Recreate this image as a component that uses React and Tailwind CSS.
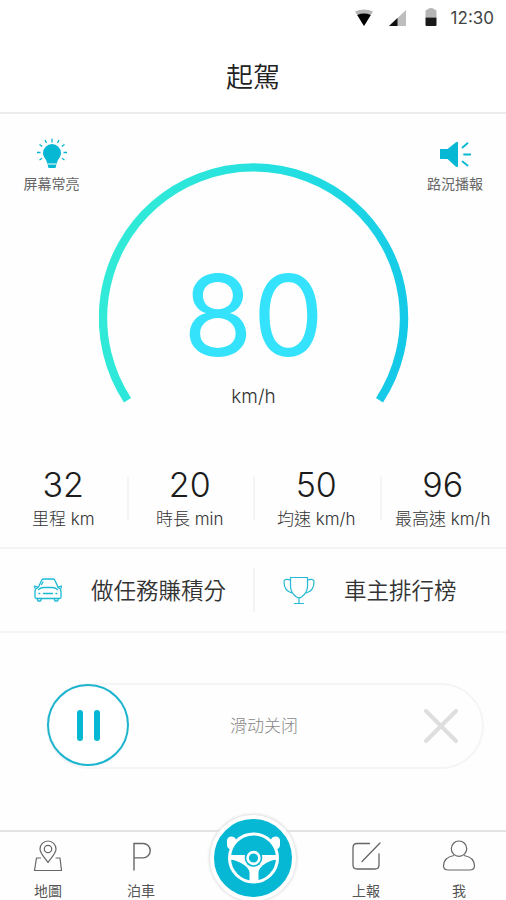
const stats = [
  { value: '32', label: '里程 km' },
  { value: '20', label: '時長 min' },
  { value: '50', label: '均速 km/h' },
  { value: '96', label: '最高速 km/h' },
];

const fontClass = "font-['Inter','Noto_Sans_CJK_TC',sans-serif]";

function StatusBar() {
  return (
    <div className="flex h-9 items-center justify-end pr-3">
      <svg className="mr-0.5 h-5 w-[94px]" viewBox="0 0 94 20" fill="none">
        <path d="M0 3.500Q9 -.5 18 3.500L9 18Z" fill="#b5b5b5" />
        <path d="M2.200 7Q9 4.200 15.800 7L9 18Z" fill="#000" />
        <path d="M34 18L51 2V18Z" fill="#bdbdbd" />
        <path d="M34 18L42.500 10V18Z" fill="#111" />
        <path d="M70.500 9.500V3q0-1.500 2-1.500Q73 0 76 0t3.500 1.500q2 0 2 1.500v6.500Z" fill="#b5b5b5" />
        <path d="M70.500 9.500h11v7.500q0 1-1 1h-9q-1 0-1-1Z" fill="#1a1a1a" />
      </svg>
      <span className="mt-0.5 text-[17px] text-[#444]">12:30</span>
    </div>
  );
}

function BulbIcon() {
  return (
    <svg className="h-8 w-8" viewBox="0 0 32 32" fill="#06b8d3">
      <path d="M16 6a9 9 0 0 0-9 9c0 5 4 6 4 10.500h10c0-4.500 4-5.500 4-10.500a9 9 0 0 0-9-9Z" />
      <path d="M11.500 26.500h9l-1 3.500h-7Z" />
      <path d="M16 .8v3.600M9 2l1.500 3M23 2l-1.500 3M3.500 6.500l2.800 2M28.500 6.500l-2.800 2M1 14.500h3.500M27.500 14.500H31M3.500 22l2.500-1.700M28.500 22L26 20.300" stroke="#06b8d3" strokeWidth="1.300" />
    </svg>
  );
}

function SpeakerIcon() {
  return (
    <svg className="h-8 w-8" viewBox="0 0 32 32" fill="#06b8d3">
      <path d="M1 11h7.500L17 4.200q2-1.200 2 1v22.600q0 2.200-2 1L8.500 21H1Z" />
      <path d="M23.500 9.500l5-4.300M25 16.500h6.500M23.500 23.500l5 4" stroke="#06b8d3" strokeWidth="1.800" strokeLinecap="round" />
    </svg>
  );
}

function Gauge() {
  return (
    <svg className="h-[242px] w-[310px] shrink-0" viewBox="0 0 310 242" fill="none">
      <defs>
        <linearGradient id="arc" x1="0" y1="100" x2="310" y2="180" gradientUnits="userSpaceOnUse">
          <stop offset="0" stopColor="#32ebd6" />
          <stop offset="0.500" stopColor="#23dfe1" />
          <stop offset="1" stopColor="#14c8e8" />
        </linearGradient>
      </defs>
      <path d="M28.500 237.200A150.500 150.500 0 1 1 280.500 237.200" stroke="url(#arc)" strokeWidth="8.400" />
    </svg>
  );
}

function CarIcon() {
  return (
    <svg className="h-7 w-7 overflow-visible" viewBox="0 0 28 28" fill="none" stroke="#1bb9d4" strokeWidth="1.300" strokeLinejoin="round" strokeLinecap="round">
      <path d="M4.500 11L7.500 4.500q.6-1.500 2-1.500h9.500q1.500 0 2 1.500l3 6.500" />
      <path d="M4 11.500q-3 1-3 4V21q0 1.500 1.500 1.500h23q1.500 0 1.500-1.500v-5.500q0-3-3-4M3.500 11L.8 10v2M24.500 11l2.700-1v2M4.500 13.500q2.500-2 5-2h9q2.500 0 5 2M9 6L7.500 8.500" />
      <path d="M3.500 22.500v1.500q0 1 1 1h1.500q1 0 1-1v-1.500M20.500 22.500v1.500q0 1 1 1h1.500q1 0 1-1v-1.500M9.500 17.500h9M5 17.500h.8M22 17.500h.8" />
    </svg>
  );
}

function TrophyIcon() {
  return (
    <svg className="h-8 w-8" viewBox="0 0 32 32" fill="none" stroke="#23b9d2" strokeWidth="1.200" strokeLinejoin="round" strokeLinecap="round">
      <path d="M7.500 3.500h17v9c0 6-3.500 8.500-6 10.500q-2.500 1.500-5 0C11 21 7.500 18.500 7.500 12.500Z" />
      <path d="M7.500 6Q1 4 1 8C1 13.500 3.500 17.500 9 19M24.500 6Q31 4 31 8C31 13.500 28.500 17.500 23 19" />
      <path d="M16 24v5M11.500 29.500h9" />
    </svg>
  );
}

function MapIcon() {
  return (
    <svg className="h-8 w-8 shrink-0" viewBox="0 0 32 32" fill="none" stroke="#666" strokeWidth="1.200" strokeLinejoin="round" strokeLinecap="round">
      <path d="M16 22.500C13 18 8 13.500 8 9a8 8 0 0 1 16 0c0 4.500-5 9-8 13.500Z" />
      <circle cx="16" cy="9" r="3.700" />
      <path d="M8.500 18H4.500L2.500 30.500H29.500L28 18H24" />
    </svg>
  );
}

function ParkingIcon() {
  return (
    <svg className="h-8 w-8 shrink-0" viewBox="0 0 32 32" fill="none" stroke="#666" strokeWidth="1.400" strokeLinecap="round">
      <path d="M9 30V3.500h9a7.200 7.200 0 0 1 0 14.400H9" />
    </svg>
  );
}

function ReportIcon() {
  return (
    <svg className="h-8 w-8 shrink-0" viewBox="0 0 32 32" fill="none" stroke="#666" strokeWidth="1.300" strokeLinecap="round">
      <path d="M19.500 3.500H7q-4 0-4 4V25q0 4 4 4H25q4 0 4-4V14M30 3L12 21.500" />
    </svg>
  );
}

function ProfileIcon() {
  return (
    <svg className="h-8 w-8 shrink-0 overflow-visible" viewBox="0 0 32 32" fill="none" stroke="#666" strokeWidth="1.200">
      <circle cx="16" cy="8.700" r="7.700" />
      <path d="M11 15.500C5 16.500.5 20 .5 26q0 4 5 4h21q5 0 5-4c0-6-4.500-9.500-10.500-10.500" />
    </svg>
  );
}

function WheelIcon() {
  return (
    <svg className="h-14 w-14" viewBox="0 0 56 56" fill="none" stroke="#fff">
      <circle cx="28.500" cy="28" r="24" strokeWidth="3" />
      <path d="M2 10q1-3.500 4-3.500 4 0 5 3l-4.500 10q-4-.5-4.500-4ZM55 10q-1-3.500-4-3.500-4 0-5 3l4.500 10q4-.5 4.500-4Z" fill="#fff" stroke="none" />
      <path d="M4.500 25h48v4.500q-4 0-7 1.500c-6 2.500-11 6-12 11V52h-9V42C23.500 37 17.500 33.500 11.500 31q-3-1.500-7-1.500Z" fill="#fff" stroke="none" />
      <circle cx="28.500" cy="28" r="8.800" fill="#06b8d3" stroke="none" />
      <circle cx="28.500" cy="28" r="5.900" strokeWidth="2.600" />
    </svg>
  );
}

function Tool({ icon, label, className }) {
  return (
    <div className={`flex flex-col items-center pt-6 ${className}`}>
      {icon}
      <span className="mt-1 text-sm leading-5 text-[#666]">{label}</span>
    </div>
  );
}

function NavItem({ icon, label, className }) {
  return (
    <div className={`flex flex-col items-center pt-2 ${className}`}>
      {icon}
      <span className="mt-[9px] text-sm leading-5 text-[#555]">{label}</span>
    </div>
  );
}

export default function App() {
  return (
    <div className={`flex h-[900px] w-[506px] flex-col overflow-hidden bg-[#fefefe] ${fontClass}`}>
      <header className="h-[114px] border-b-2 border-[#ececec] bg-white">
        <StatusBar />
        <h1 className="mt-[22px] text-center text-[27px] leading-10 font-[350] text-[#222]">起駕</h1>
      </header>

      <section className="flex h-[350px]">
        <Tool icon={<BulbIcon />} label="屏幕常亮" className="w-[103px]" />
        <div className="flex min-w-0 flex-1 flex-col items-center pt-[49px]">
          <Gauge />
          <div className="-mt-[146px] text-[113px] leading-[113px] font-[370] text-[#35e2fc]">80</div>
          <div className="mt-[11px] text-[19px] leading-7 font-light text-[#333]">km/h</div>
        </div>
        <Tool icon={<SpeakerIcon />} label="路況播報" className="w-[102px]" />
      </section>

      <section className="flex h-[85px] border-b-2 border-[#f4f4f4]">
        {stats.map((s, i) => (
          <div key={s.label} className="flex flex-1 items-start">
            <div className="flex flex-1 flex-col items-center">
              <span className="mt-px text-[34px] leading-10 font-[350] text-[#1c1c1c]">{s.value}</span>
              <span className="mt-0.5 text-[17px] leading-6 font-light whitespace-nowrap text-[#333]">{s.label}</span>
            </div>
            {i < 3 && <div className="mt-3 -mr-0.5 h-11 w-0.5 bg-[#f5f5f5]" />}
          </div>
        ))}
      </section>

      <section className="flex h-21 items-center border-b-2 border-[#f5f5f5]">
        <div className="flex w-[253px] items-center pl-[34px]">
          <CarIcon />
          <span className="mt-0.5 ml-[29px] text-[22.5px] font-[350] text-[#333]">做任務賺積分</span>
        </div>
        <div className="h-11 w-0.5 bg-[#f3f3f3]" />
        <div className="flex flex-1 items-center pl-7">
          <TrophyIcon />
          <span className="mt-0.5 ml-[29px] text-[22.5px] font-[350] text-[#333]">車主排行榜</span>
        </div>
      </section>

      <section className="h-[197px] pt-[50px] pr-[22px] pl-[46px]">
        <div className="flex h-[86px] items-center rounded-full border-2 border-[#f5f5f5] pr-[23px]">
          <button className="-mt-0.5 -ml-px flex h-[82px] w-[82px] items-center justify-center gap-[11px] rounded-full border-[2.5px] border-[#1cb4ce] bg-white">
            <span className="h-[31px] w-1.5 rounded-sm bg-[#06b8d3]" />
            <span className="h-[31px] w-1.5 rounded-sm bg-[#06b8d3]" />
          </button>
          <span className="mt-0.5 ml-[101px] flex-1 text-[17px] font-light text-[#888]">滑动关闭</span>
          <svg className="h-9 w-9" viewBox="0 0 36 36" stroke="#dedede" strokeWidth="4" strokeLinecap="round">
            <path d="M3 3L33 33M33 3L3 33" />
          </svg>
        </div>
      </section>

      <nav className="flex h-[70px] border-t-2 border-[#e3e3e3]">
        <NavItem icon={<MapIcon />} label="地圖" className="w-24" />
        <NavItem icon={<ParkingIcon />} label="泊車" className="w-[90px]" />
        <div className="flex flex-1 items-start justify-center">
          <div className="-mt-[17px] flex h-[86px] w-[86px] shrink-0 items-center justify-center rounded-full border-4 border-white bg-[#06b8d3] shadow-[0_0_3px_1px_#dedede]">
            <WheelIcon />
          </div>
        </div>
        <NavItem icon={<ReportIcon />} label="上報" className="w-[92px]" />
        <NavItem icon={<ProfileIcon />} label="我" className="w-[94px]" />
      </nav>
    </div>
  );
}
